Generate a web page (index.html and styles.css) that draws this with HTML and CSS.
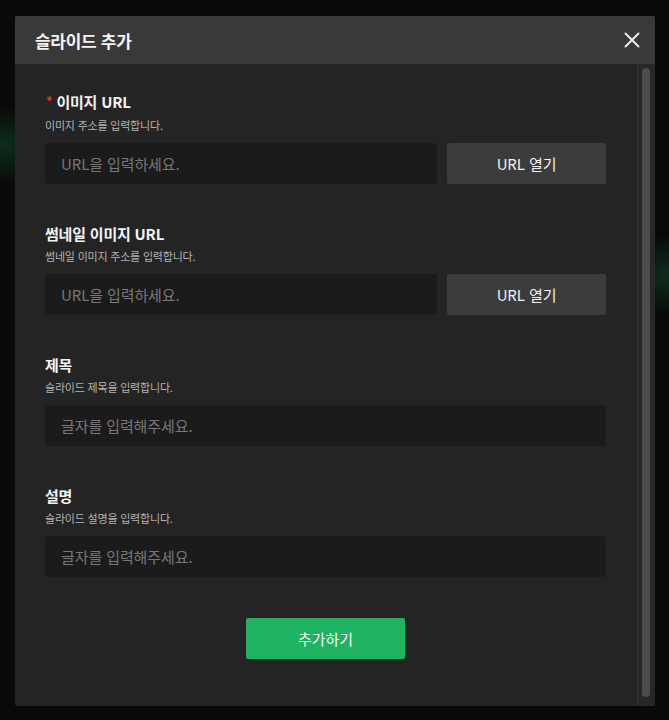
FILE: index.html
```html
<!DOCTYPE html>
<html lang="ko">
<head>
<meta charset="utf-8">
<title>슬라이드 추가</title>
<link rel="stylesheet" href="styles.css">
</head>
<body>
<div class="backdrop">
  <div class="modal">
    <div class="modal-header">
      <h2 class="modal-title">슬라이드 추가</h2>
      <button class="close-btn" aria-label="닫기">
        <svg width="16" height="16" viewBox="0 0 16 16"><path d="M1.5 1.5 L14.5 14.5 M14.5 1.5 L1.5 14.5" stroke="#f2f2f2" stroke-width="1.8" fill="none" stroke-linecap="round"/></svg>
      </button>
    </div>
    <div class="modal-body">
      <div class="form">
        <div class="field">
          <div class="label"><span class="req">*</span>이미지 URL</div>
          <div class="desc">이미지 주소를 입력합니다.</div>
          <div class="input-row">
            <div class="input">URL을 입력하세요.</div>
            <button class="btn-gray">URL 열기</button>
          </div>
        </div>
        <div class="field">
          <div class="label">썸네일 이미지 URL</div>
          <div class="desc">썸네일 이미지 주소를 입력합니다.</div>
          <div class="input-row">
            <div class="input">URL을 입력하세요.</div>
            <button class="btn-gray">URL 열기</button>
          </div>
        </div>
        <div class="field">
          <div class="label">제목</div>
          <div class="desc">슬라이드 제목을 입력합니다.</div>
          <div class="input-row">
            <div class="input">글자를 입력해주세요.</div>
          </div>
        </div>
        <div class="field">
          <div class="label">설명</div>
          <div class="desc">슬라이드 설명을 입력합니다.</div>
          <div class="input-row">
            <div class="input">글자를 입력해주세요.</div>
          </div>
        </div>
        <div class="actions">
          <button class="btn-green">추가하기</button>
        </div>
      </div>
      <div class="scrollbar"><div class="thumb"></div></div>
    </div>
  </div>
</div>
</body>
</html>
```
FILE: styles.css
```css
* { box-sizing: border-box; }
html, body { margin: 0; padding: 0; }
body {
  width: 669px;
  height: 720px;
  overflow: hidden;
  background-color: #090909;
  background-image:
    radial-gradient(ellipse 60px 40px at 0px 145px, rgba(20, 90, 50, 0.45), rgba(20, 90, 50, 0) 100%),
    radial-gradient(ellipse 60px 40px at 669px 275px, rgba(20, 90, 50, 0.45), rgba(20, 90, 50, 0) 100%);
  font-family: "Noto Sans CJK KR", "Noto Sans", sans-serif;
  color: #fff;
}
.backdrop {
  padding: 16px 14px 14px 15px;
}
.modal {
  width: 640px;
  height: 690px;
  background: #242424;
  border-radius: 2px;
  display: flex;
  flex-direction: column;
  overflow: hidden;
}
.modal-header {
  height: 48px;
  flex: none;
  background: #393939;
  display: flex;
  align-items: center;
  justify-content: space-between;
  padding: 0 15px 0 20px;
}
.modal-title {
  margin: 0;
  font-size: 17px;
  font-weight: 700;
  letter-spacing: -0.3px;
  color: #f4f4f4;
}
.close-btn {
  background: none;
  border: 0;
  padding: 0;
  width: 16px;
  height: 16px;
  display: flex;
}
.modal-body {
  flex: 1;
  display: flex;
  min-height: 0;
}
.form {
  flex: 1;
  padding: 28px 31px 0 30px;
}
.field { margin-bottom: 40px; }
.field:nth-of-type(4) { margin-bottom: 41px; }
.label {
  font-size: 15px;
  font-weight: 700;
  line-height: 20px;
  color: #f4f4f4;
  letter-spacing: -0.2px;
}
.req {
  color: #e0352b;
  font-size: 13px;
  margin: 0 4px 0 1px;
  position: relative;
  top: -2px;
}
.desc {
  margin-top: 4px;
  font-size: 11px;
  line-height: 16px;
  color: #b4b4b4;
  letter-spacing: -0.2px;
}
.input-row {
  margin-top: 10px;
  display: flex;
  gap: 10px;
  height: 41px;
}
.input {
  flex: 1;
  background: #1b1b1b;
  border-radius: 3px;
  font-size: 15px;
  line-height: 41px;
  color: #777;
  padding-left: 16px;
  letter-spacing: -0.1px;
}
.btn-gray {
  width: 159px;
  flex: none;
  border: 0;
  border-radius: 2px;
  background: #3c3c3c;
  color: #f2f2f2;
  font-family: inherit;
  font-size: 15px;
  font-weight: 400;
  letter-spacing: -0.1px;
}
.actions {
  display: flex;
  justify-content: center;
}
.btn-green {
  width: 159px;
  height: 41px;
  border: 0;
  border-radius: 2px;
  background: #1eb263;
  color: #f4fff8;
  font-family: inherit;
  font-size: 15px;
  font-weight: 400;
  letter-spacing: -0.1px;
}
.scrollbar {
  width: 18px;
  flex: none;
  background: #272727;
  border-left: 1px solid #313131;
  padding: 4px 4px 9px 4px;
}
.thumb {
  width: 8px;
  height: 100%;
  background: #4b4b4b;
  border-radius: 4px;
}
```
